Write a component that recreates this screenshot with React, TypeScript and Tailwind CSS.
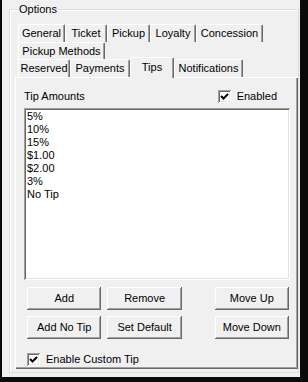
import React from 'react';

const raised =
  'shadow-[inset_-1px_-1px_#696969,inset_1px_1px_#ffffff,inset_-2px_-2px_#a0a0a0,inset_2px_2px_#f0f0f0]';
const sunken =
  'shadow-[inset_1px_1px_#a0a0a0,inset_-1px_-1px_#ffffff,inset_2px_2px_#696969,inset_-2px_-2px_#e3e3e3]';

const Tab = ({ label, w, active = false }: { label: string; w: string; active?: boolean }) => (
  <div
    className={`${w} ${
      active ? 'h-[21px] -mb-px relative z-10 pt-[2px]' : 'h-[18px]'
    } bg-[#f0f0f0] flex items-start justify-center pt-[1px] shrink-0 border-l border-t border-white border-r border-r-[#696969] rounded-t-[2px] shadow-[inset_-1px_0_#a0a0a0]`}
  >
    <span className="leading-[15px]">{label}</span>
  </div>
);

const Button = ({ label }: { label: string }) => (
  <button className={`w-[75px] h-[23px] bg-[#f0f0f0] ${raised} leading-[23px] text-center`}>
    {label}
  </button>
);

const Check = ({ label }: { label: string }) => (
  <label className="flex items-center gap-[6px]">
    <span className={`w-[13px] h-[13px] bg-white ${sunken} flex items-center justify-center`}>
      <svg width="9" height="9" viewBox="0 0 9 9">
        <path d="M1 4 L3.5 6.5 L8 2" stroke="#000" strokeWidth="2" fill="none" />
      </svg>
    </span>
    <span>{label}</span>
  </label>
);

const tips = ['5%', '10%', '15%', '$1.00', '$2.00', '3%', 'No Tip'];

export default function App() {
  return (
    <div
      className="w-[308px] h-[382px] bg-[#f0f0f0] border-l-2 border-r-[8px] border-b-[5px] border-[#0a0a0a] text-[11px] text-black overflow-hidden"
      style={{ fontFamily: '"Liberation Sans", Arial, sans-serif' }}
    >
      <fieldset className="mt-[3px] ml-[7px] mr-[1px] h-[370px] border border-[#d5dfe5] shadow-[inset_1px_1px_#ffffff] pl-[5px]">
        <legend className="ml-[3px] px-[1px] leading-[13px]">Options</legend>

        <div className="pt-[8px] pl-[3px] flex flex-col">
          <div className="flex h-[18px]">
            <Tab label="General" w="w-[47px]" />
            <Tab label="Ticket" w="w-[42px]" />
            <Tab label="Pickup" w="w-[43px]" />
            <Tab label="Loyalty" w="w-[46px]" />
            <Tab label="Concession" w="w-[67px]" />
          </div>
          <div className="flex h-[18px]">
            <Tab label="Pickup Methods" w="w-[87px]" />
          </div>
          <div className="flex h-[17px] items-end">
            <Tab label="Reserved" w="w-[52px]" />
            <Tab label="Payments" w="w-[60px]" />
            <Tab label="Tips" w="w-[44px]" active />
            <Tab label="Notifications" w="w-[69px]" />
          </div>
        </div>

        <div className="w-[283px] h-[292px] bg-[#f0f0f0] shadow-[inset_1px_1px_#ffffff,inset_-1px_-1px_#696969,inset_-2px_-2px_#a0a0a0] px-[9px] pt-[13px]">
          <div className="flex justify-between items-center h-[13px] pr-[12px]">
            <span>Tip Amounts</span>
            <Check label="Enabled" />
          </div>
          <div className={`mt-[5px] w-[266px] h-[172px] bg-white ${sunken} pt-[2px] pl-[3px]`}>
            {tips.map((t) => (
              <div key={t} className="leading-[13px]">
                {t}
              </div>
            ))}
          </div>
          <div className="mt-[7px] ml-[3px] flex flex-col gap-[6px]">
            <div className="flex">
              <Button label="Add" />
              <div className="w-[6px]" />
              <Button label="Remove" />
              <div className="w-[33px]" />
              <Button label="Move Up" />
            </div>
            <div className="flex">
              <Button label="Add No Tip" />
              <div className="w-[6px]" />
              <Button label="Set Default" />
              <div className="w-[33px]" />
              <Button label="Move Down" />
            </div>
          </div>
          <div className="mt-[12px] ml-[3px]">
            <Check label="Enable Custom Tip" />
          </div>
        </div>
      </fieldset>
    </div>
  );
}
